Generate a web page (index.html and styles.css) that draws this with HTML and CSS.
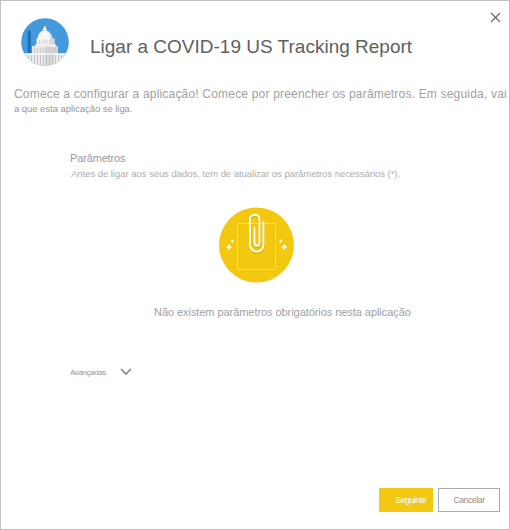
FILE: index.html
```html
<!DOCTYPE html>
<html lang="pt">
<head>
<meta charset="utf-8">
<title>Ligar a COVID-19 US Tracking Report</title>
<link rel="stylesheet" href="styles.css">
</head>
<body>
<main class="dialog">
  <button class="close" aria-label="Fechar">
    <svg width="11" height="11" viewBox="0 0 11 11"><path d="M1 1l9 9M10 1l-9 9" fill="none" stroke="#666" stroke-width="1.1"/></svg>
  </button>
  <header class="header">
    <svg class="logo" width="48" height="48" viewBox="0 0 48 48">
      <defs><clipPath id="disc"><circle cx="24" cy="24" r="23.8"/></clipPath></defs>
      <g clip-path="url(#disc)">
        <rect width="48" height="48" fill="#4499dc"/>
        <path d="M6.500 37V14l1.700-3L10 14v23z" fill="#1f73bd"/>
        <path d="M11 28h26v9H11z" fill="#e6e6e6"/>
        <path d="M24 28h13v9H24z" fill="#d2d2d2"/>
        <path d="M14 26.500h21v2H14zM15.500 20.500h18v6h-18z" fill="#f3f3f3"/>
        <path d="M16.700 21c0-4.500 2.500-7.500 5.300-8.500V10h1V8h1.500v2h1v2.500c3.300 1 5.800 4 5.800 8.500z" fill="#f7f7f7"/>
        <path d="M25 12.700c4 .8 6.300 4.300 6.300 8.300h2.200v5.500H29V21c0-4-1.500-6.500-4-8.300z" fill="#dadada"/>
        <path d="M18.500 22v4M21 22v4M23.500 22v4M26 22v4M28.500 22v4M13.500 30v5M16.500 30v5M19.500 30v5M22.500 30v5M25.500 30v5M28.500 30v5M31.500 30v5M34.500 30v5" stroke="#c6c6c6" stroke-width=".7"/>
        <path d="M0 35.500h48V48H0z" fill="#eeeeee"/>
        <path d="M24 35.500h9V48h-9z" fill="#d8d8d8"/>
        <path d="M4.500 37v11M7.500 37v11M10.500 37v11M13.500 37v11M16.500 37v11M19.500 37v11M22.500 37v11M25.500 37v11M28.500 37v11M31.500 37v11M34.500 37v11M37.500 37v11M40.500 37v11M43.500 37v11" stroke="#c4c4c4" stroke-width="1.100"/>
        <path d="M1 36h46" stroke="#f5f5f5" stroke-width="1.500"/>
      </g>
    </svg>
    <h1 class="title">Ligar a COVID-19 US Tracking Report</h1>
  </header>
  <div class="intro">
    <p class="intro-lead">Comece a configurar a aplicação! Comece por preencher os parâmetros. Em seguida, vai</p>
    <p class="intro-rest">a que esta aplicação se liga.</p>
  </div>
  <section class="parameters">
    <h2 class="section-title">Parâmetros</h2>
    <p class="section-hint">Antes de ligar aos seus dados, tem de atualizar os parâmetros necessários (*).</p>
  </section>
  <section class="empty">
    <svg class="empty-art" width="76" height="76" viewBox="0 0 76 76">
      <circle cx="38.500" cy="38" r="37.500" fill="#f2c811"/>
      <rect x="19.500" y="16.500" width="38" height="46" rx="1" fill="none" stroke="#fbeeb3" stroke-dasharray="2 1"/>
      <g fill="none" stroke-linecap="round">
        <path d="M45.500 15v22.500c0 9.300-13.500 9.300-13.500 0V12.500c0-6.300 9.500-6.300 9.500 0V35c0 5-5 5-5 0V21" stroke="#a88900" stroke-opacity=".3" stroke-width="2.500" transform="translate(.3 1.300)"/>
        <path d="M45.500 15v22.500c0 9.300-13.500 9.300-13.500 0V12.500c0-6.300 9.500-6.300 9.500 0V35c0 5-5 5-5 0V21" stroke="#fffdf2" stroke-width="1.900"/>
      </g>
      <path d="M11 37.200l1 1.900 1.900 1-1.900 1-1 1.900-1-1.900-1.900-1 1.900-1zM14.300 32.500l.6 1.100 1.100.6-1.100.6-.6 1.100-.6-1.100-1.100-.6 1.100-.6zM66.300 37.200l1 1.900 1.900 1-1.900 1-1 1.900-1-1.900-1.900-1 1.900-1zM62.700 32.500l.6 1.100 1.100.6-1.100.6-.6 1.100-.6-1.100-1.100-.6 1.100-.6z" fill="#fff" stroke="#fff" stroke-width=".3"/>
    </svg>
    <p class="empty-text">Não existem parâmetros obrigatórios nesta aplicação</p>
  </section>
  <button class="advanced">
    <span class="advanced-label">Avançadas</span>
    <svg width="12" height="8" viewBox="0 0 12 8"><path d="M1 1l5 5 5-5" fill="none" stroke="#777" stroke-width="1.400"/></svg>
  </button>
  <footer class="actions">
    <button class="btn btn-primary">Seguinte</button>
    <button class="btn btn-secondary">Cancelar</button>
  </footer>
</main>
</body>
</html>
```
FILE: styles.css
```css
* { box-sizing: border-box; }
body { margin: 0; background: #fff; font-family: "Liberation Sans", Arial, sans-serif; }
h1, h2, p { margin: 0; font-weight: 400; white-space: nowrap; }
button { margin: 0; padding: 0; border: 0; background: none; font-family: inherit; }
svg { display: block; flex: none; }

.dialog {
  position: relative;
  display: flex;
  flex-direction: column;
  width: 510px;
  height: 530px;
  border: 1px solid #c0c0c0;
  overflow: hidden;
}
.close { position: absolute; top: 11px; right: 8px; }
.header { display: flex; gap: 21px; padding: 17px 0 0 20px; }
.title { margin-top: 17px; font-size: 19px; line-height: 24px; color: #606060; }
.intro { padding: 20px 0 0 13px; color: #a0a0a0; }
.intro-lead { font-size: 12px; line-height: 16px; letter-spacing: .19px; }
.intro-rest { font-size: 9.500px; line-height: 13px; letter-spacing: -.05px; color: #969696; }
.parameters { padding: 36px 0 0 69px; }
.section-title { font-size: 11px; line-height: 14px; letter-spacing: -.15px; color: #999; }
.section-hint { margin-top: 2px; padding-left: 1px; font-size: 9.500px; line-height: 13px; letter-spacing: -.04px; color: #adadad; }
.empty { display: flex; flex-direction: column; padding-top: 27px; }
.empty-art { margin-left: 217px; }
.empty-text { margin: 22px 0 0 153px; font-size: 11px; line-height: 14px; letter-spacing: -.06px; color: #a0a0a0; }
.advanced { display: flex; align-items: center; gap: 15px; margin: 46px 0 0 69px; height: 14px; }
.advanced-label { width: 35px; font-size: 8px; letter-spacing: -.4px; text-align: left; color: #999; }
.actions { display: flex; justify-content: flex-end; gap: 5px; margin-top: auto; padding: 0 9px 17px 0; }
.btn { height: 24px; font-size: 8.500px; letter-spacing: -.35px; white-space: nowrap; }
.btn-primary { width: 54px; padding-left: 10px; background: #f2c811; color: #fff; }
.btn-secondary { width: 62px; border: 1px solid #aaa; color: #8c8c8c; }
```
